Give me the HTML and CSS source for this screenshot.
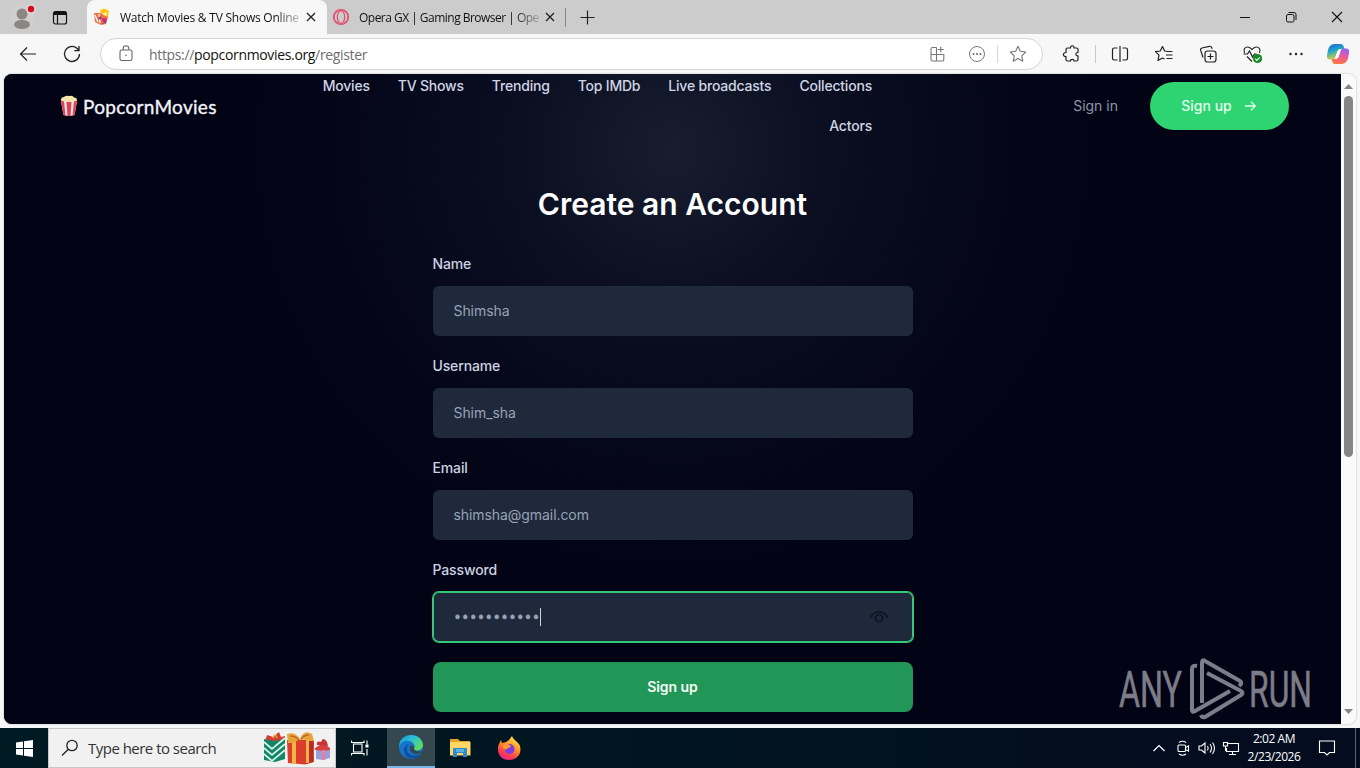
FILE: index.html
```
<!DOCTYPE html>
<html lang="en">
<head>
<meta charset="utf-8">
<title>Create an Account</title>
<link rel="stylesheet" href="styles.css">
</head>
<body>
<div class="desktop">
  <div class="tabstrip">
    <div class="strip-tools">
      <svg class="profile" width="28" height="30" viewBox="0 0 28 30"><circle cx="14" cy="14.500" r="13" fill="#d0cfce"/><circle cx="14" cy="12" r="5.500" fill="#8b8785"/><ellipse cx="14" cy="22.500" rx="8" ry="4.500" fill="#8b8785"/><circle cx="23" cy="7" r="5" fill="#e0d5d5"/><circle cx="23" cy="7" r="3.200" fill="#d30b1f"/></svg>
      <svg class="workspaces" width="16" height="16" viewBox="0 0 16 16" fill="none" stroke="#111" stroke-width="1.200"><rect x="1.500" y="1.500" width="13" height="12.500" rx="2"/><path d="M2 3.500h12" stroke-width="3"/><path d="M5.500 5v9"/></svg>
    </div>
    <div class="tab active">
      <svg class="favicon" width="18" height="18" viewBox="0 0 18 18"><path d="M7 2l4-1.500 3 1 2 1.500-1 6-7-1z" fill="#ffc61c"/><path d="M1 5l6 0 8 4-2 7-5 1-6-3z" fill="#f2703d"/><path d="M2 7l3 7M6 6l1 9" stroke="#fff" stroke-width="1.300"/><path d="M9 6l5-2-1 4z" fill="#fff1b0"/><circle cx="7" cy="10" r="1.600" fill="#8b3c94"/><circle cx="11" cy="12" r="2" fill="#d6257a"/><path d="M8 16l4-2 2-5-1 6z" fill="#6840a8"/></svg>
      <span class="tab-title first-title">Watch Movies &amp; TV Shows Online</span>
      <svg class="tab-close" width="10" height="10" viewBox="0 0 10 10"><path d="M1 1l8 8M9 1L1 9" stroke="#222" stroke-width="1.300"/></svg>
    </div>
    <div class="tab">
      <svg class="favicon" width="18" height="18" viewBox="0 0 18 18" fill="none" stroke="#e5486a"><circle cx="9" cy="9" r="7.400" stroke-width="1.300"/><ellipse cx="9" cy="9" rx="3.700" ry="6.300" stroke-width="1.200"/><path d="M6 3c-5 2-5 10 0 12M12 3c5 2 5 10 0 12" stroke-width=".8"/></svg>
      <span class="tab-title second-title">Opera GX | Gaming Browser | Ope</span>
      <svg class="tab-close" width="10" height="10" viewBox="0 0 10 10"><path d="M1 1l8 8M9 1L1 9" stroke="#222" stroke-width="1.300"/></svg>
      <i class="tab-divider"></i>
    </div>
    <svg class="new-tab" width="15" height="15" viewBox="0 0 15 15"><path d="M7.500 .5v14M.5 7.500h14" stroke="#222" stroke-width="1.200"/></svg>
    <div class="window-buttons">
      <svg width="46" height="34" viewBox="0 0 46 34"><path d="M18 17.500h10" stroke="#111"/></svg>
      <svg width="46" height="34" viewBox="0 0 46 34" fill="none" stroke="#111"><rect x="18.500" y="14.500" width="7.500" height="7.500" rx="1.500"/><path d="M20.500 12.500h5.500q2 0 2 2v5.500"/></svg>
      <svg width="46" height="34" viewBox="0 0 46 34"><path d="M18 12l10 10M28 12L18 22" stroke="#111" stroke-width="1.100"/></svg>
    </div>
  </div>

  <div class="toolbar">
    <svg class="tool nav-tool" width="20" height="20" viewBox="0 0 20 20" fill="none" stroke="#222" stroke-width="1.200"><path d="M18 10H2.500M9 3.500L2.500 10 9 16.500"/></svg>
    <svg class="tool nav-tool" width="20" height="20" viewBox="0 0 20 20" fill="none" stroke="#222" stroke-width="1.300"><path d="M17.500 10a7.500 7.500 0 1 1-2.600-5.700L17 6.500M17 2v4.700h-4.700"/></svg>
    <div class="address">
      <svg class="lock" width="16" height="18" viewBox="0 0 16 18" fill="none" stroke="#666" stroke-width="1.100"><rect x="2" y="5" width="12" height="10.500" rx="1.800"/><path d="M5.200 5V3.500a2.800 2.800 0 0 1 5.600 0V5"/><circle cx="8" cy="10.200" r=".8" fill="#666" stroke="none"/></svg>
      <span class="url">https://<b>popcornmovies.org</b>/register</span>
      <svg class="addr-icon" width="18" height="18" viewBox="0 0 18 18" fill="none" stroke="#777" stroke-width="1.100"><path d="M8.500 2.500h-4q-1.500 0-1.500 1.500v10.500q0 1.500 1.500 1.500h10q1.300 0 1.300-1.500V9.500H3M8.500 2.500v13.500M12.800 1.500v6M9.800 4.500h6"/></svg>
      <svg class="addr-icon dots-icon" width="18" height="18" viewBox="0 0 18 18" fill="none" stroke="#777"><circle cx="9" cy="9" r="7.500"/><g fill="#666" stroke="none"><circle cx="5.500" cy="9" r="1"/><circle cx="9" cy="9" r="1"/><circle cx="12.500" cy="9" r="1"/></g></svg>
      <i class="addr-divider"></i>
      <svg class="addr-icon" width="18" height="18" viewBox="0 0 18 18" fill="none" stroke="#777" stroke-width="1.100" stroke-linejoin="round"><path d="M9 1.300l2.300 5 5.500.7-4 3.800 1 5.500L9 13.600l-4.800 2.700 1-5.500-4-3.800 5.500-.7z"/></svg>
    </div>
    <svg class="tool" width="20" height="20" viewBox="0 0 20 20" fill="none" stroke="#222" stroke-width="1.200" stroke-linejoin="round"><path d="M6.500 4h3c-.5-3 4-3 3.500 0H15.500q1.500 0 1.500 1.500v3c-2.800-.3-2.800 3.600 0 3.300v3.700q0 1.500-1.500 1.500H13c.3-2.300-3.800-2.300-3.500 0h-3Q5 17 5 15.500v-3c-3.500.5-3.500-4.300 0-4v-3Q5 4 6.500 4z"/></svg>
    <i class="tool-divider"></i>
    <svg class="tool" width="20" height="20" viewBox="0 0 20 20" fill="none" stroke="#222" stroke-width="1.200"><path d="M7.500 4H4.200Q2.500 4 2.500 5.700v8.600Q2.500 16 4.200 16h3.300M12.500 4h3.300q1.700 0 1.700 1.700v8.600q0 1.700-1.700 1.700h-3.300M10 2v16"/></svg>
    <svg class="tool" width="20" height="20" viewBox="0 0 20 20" fill="none" stroke="#222" stroke-width="1.200" stroke-linejoin="round"><path d="M12.500 7.500h6M12 11h6.500M12.500 14.500h6M14 7.500l-3.400-.5L8.500 2.500 6.200 7l-4.700.7 3.500 3.500-1 5.300 4.500-2.500 2 1"/></svg>
    <svg class="tool" width="20" height="20" viewBox="0 0 20 20" fill="none" stroke="#222" stroke-width="1.200"><rect x="7" y="7" width="11" height="11" rx="2.500"/><path d="M12.500 9.500v6M9.500 12.500h6M5 13.500L2.700 6.400q-.5-1.900 1.200-2.400l7.500-1.700q1.800-.3 2.400 1.500l.3 1"/></svg>
    <svg class="tool" width="20" height="20" viewBox="0 0 20 20" fill="none" stroke="#222" stroke-width="1.200"><path d="M2.500 9C1 5 3.200 3 5.500 3 8 3 9 4.500 10 5.500 11 4.500 12 3 14.500 3c2.300 0 4.500 2 3 6M1.500 10h4L7.500 7l3 6 2-3h2M5 12.500l5 5"/><circle cx="15.500" cy="14.500" r="4.600" fill="#138a20" stroke="none"/><path d="M13.200 14.700l1.600 1.600 3-3" stroke="#fff"/></svg>
    <svg class="tool" width="20" height="20" viewBox="0 0 20 20" fill="#222"><circle cx="4.500" cy="10" r="1.200"/><circle cx="10" cy="10" r="1.200"/><circle cx="15.500" cy="10" r="1.200"/></svg>
    <svg class="tool copilot" width="24" height="24" viewBox="0 0 24 24">
      <defs><linearGradient id="cp1" x1="0" y1="0" x2=".3" y2="1"><stop offset="0" stop-color="#1b62d8"/><stop offset=".5" stop-color="#22a8c4"/><stop offset="1" stop-color="#d6cf3c"/></linearGradient><linearGradient id="cp2" x1=".6" y1="0" x2=".3" y2="1"><stop offset="0" stop-color="#9c5ff0"/><stop offset=".5" stop-color="#ef5a92"/><stop offset="1" stop-color="#ff7a3c"/></linearGradient></defs>
      <path d="M8 2h7q2 0 2.700 2.500L18.500 7H14q-2 0-2.700 2.500L9.500 15q-.8 2.500-3 2.500H4q-3.500 0-3-4Q2 2 8 2z" fill="url(#cp1)"/>
      <path d="M16 22H9q-2 0-2.700-2.500L5.500 17H10q2 0 2.700-2.500L14.500 9q.8-2.500 3-2.500H20q3.500 0 3 4Q22 22 16 22z" fill="url(#cp2)"/><path d="M11.500 9h3l-2 6h-3z" fill="#fff"/>
    </svg>
  </div>

  <div class="viewport">
    <div class="page">
      <header class="site-header">
        <div class="brand">
          <svg width="18" height="22" viewBox="0 0 18 22"><path d="M1 5q0-3 3-3 2-2 5-1 4-1 5 1.500 3 0 3 3l-1 3H2z" fill="#f5e6ad"/><path d="M.8 5.500L3.500 20q5.500 2 11 0L17.200 5.500Q9 8 .8 5.500z" fill="#f6dfe0"/><path d="M.8 5.500L3.500 20l2 .6L4 6.500zM6.500 7l1 14h3l1-14zM14 6.500L12.500 20.600l2-.6L17.200 5.500z" fill="#dd4357"/></svg>
          <span class="brand-name">PopcornMovies</span>
        </div>
        <nav class="menu">
          <a>Movies</a><a>TV Shows</a><a>Trending</a><a>Top IMDb</a><a>Live broadcasts</a><a>Collections</a><a>Actors</a>
        </nav>
        <div class="account">
          <a class="sign-in">Sign in</a>
          <a class="pill">Sign up <svg width="14" height="12" viewBox="0 0 14 12" fill="none" stroke="currentColor" stroke-width="1.300"><path d="M1 6h10.500M7 1.800L11.300 6 7 10.200"/></svg></a>
        </div>
      </header>
      <main class="form">
        <h1>Create an Account</h1>
        <div class="field"><label>Name</label><div class="input">Shimsha</div></div>
        <div class="field"><label>Username</label><div class="input">Shim_sha</div></div>
        <div class="field"><label>Email</label><div class="input">shimsha@gmail.com</div></div>
        <div class="field"><label>Password</label><div class="input focused"><span class="dots">•••••••••••</span><i class="caret"></i>
          <svg class="eye" width="20" height="16" viewBox="0 0 20 16" fill="none" stroke="#0a1220" stroke-width="1.500"><circle cx="10" cy="9" r="3.600"/><path d="M1.500 9C4 1 16 1 18.500 9"/></svg></div></div>
        <button class="submit">Sign up</button>
      </main>
      <svg class="watermark" width="210" height="66" viewBox="0 0 210 66">
        <g fill="#7c7d88" stroke="#7c7d88" stroke-width=".6" font-family="Roboto, sans-serif" font-size="50"><text x="5" y="51" textLength="63" lengthAdjust="spacingAndGlyphs">ANY</text><text x="135" y="51" textLength="63" lengthAdjust="spacingAndGlyphs">RUN</text></g>
        <g fill="none" stroke="#7c7d88" stroke-width="4" stroke-linejoin="round" stroke-linecap="butt"><path d="M83 10q-5-1-5 3v41q0 3 3 1l35-20"/><path d="M88 47V7q0-4 3-2l35 20q3 2-1 5"/><path d="M93 17l34 18q3 2 0 4L91 61q-3 1-4-2"/></g>
      </svg>
    </div>
    <div class="scrollbar">
      <svg width="9" height="5" viewBox="0 0 9 5"><path d="M0 5L4.500 0 9 5z" fill="#858585"/></svg>
      <i class="thumb"></i>
      <svg class="down" width="9" height="5" viewBox="0 0 9 5"><path d="M0 0l4.500 5L9 0z" fill="#858585"/></svg>
    </div>
  </div>

  <div class="taskbar">
    <div class="start"><svg width="17" height="17" viewBox="0 0 17 17" fill="#fff"><path d="M0 2.400L7 1.400V8H0zM8 1.200L17 0v8H8zM0 9h7v6.600L0 14.600zM8 9h9v8l-9-1.200z"/></svg></div>
    <div class="search">
      <svg width="18" height="18" viewBox="0 0 18 18" fill="none" stroke="#222" stroke-width="1.300"><circle cx="11" cy="6.500" r="5.200"/><path d="M7.300 10.200L1 16.500"/></svg>
      <span>Type here to search</span>
      <svg class="gifts" width="68" height="34" viewBox="0 0 68 34">
        <path d="M2 10l2-6 6 2 6-5 2 5 4-1v6z" fill="#d63d32"/><path d="M10 7q2-6 4 0" fill="none" stroke="#e7b53e" stroke-width="1.500"/><path d="M1 8l10 2 11-2v20l-10 3-11-2z" fill="#118666"/><path d="M1 11l8 7 13-11M1 17l8 7 13-11M1 23l8 7 13-11" fill="none" stroke="#d9f5ea" stroke-width="1.700"/>
        <path d="M24 9h27v22l-9 2.500L25 32z" fill="#db3d2c"/><path d="M43 10h7v21l-7 2z" fill="#b72c25"/><path d="M29 9h4v24h-4zM43 9h3v23h-3z" fill="#f1b447"/><path d="M24 3q8-3 13 5Q41-2 49 3l2 7h-5l-8-2-9 4h-4z" fill="#e8a43a"/><path d="M27 5q6 0 9 4M46 4q-6 0-8 5" fill="none" stroke="#bd6d23" stroke-width="1.400"/>
        <path d="M53 18l14-1v10l-7 2-7-1z" fill="#9b9fd8"/><path d="M52 17l8-5 7 5v2l-7 1-8-1z" fill="#d9413f"/><path d="M54 14q-1-5 4-3 2-6 6 0l1 4z" fill="#c93435"/><path d="M59 19h3v10h-3z" fill="#e87ea8"/>
      </svg>
    </div>
    <div class="task task-view"><svg width="18" height="18" viewBox="0 0 18 18" fill="none" stroke="#fff" stroke-width="1.100"><rect x="2.500" y="5" width="8.500" height="8"/><path d="M.5 1.500v2h12.500v-2M.5 16.500v-2h12.500v2M16 1.500v4M16 10v6.500"/><path d="M14.500 5.500h3v3h-3z" fill="#fff" stroke="none"/></svg></div>
    <div class="task current"><svg width="26" height="26" viewBox="0 0 26 26"><defs><linearGradient id="eg" x1="0" y1="0" x2="1" y2=".7"><stop offset="0" stop-color="#168fdf"/><stop offset=".5" stop-color="#2bc3d2"/><stop offset="1" stop-color="#66dc54"/></linearGradient></defs><circle cx="13" cy="13" r="12" fill="#1473cb"/><path d="M1 13C1 5 7 1 13 1c8 0 12 6 12 10 0 6-9 7-9 4 1-2 1-4-1-6C11 5 3 6 1 13z" fill="url(#eg)"/><path d="M9 14c0 8 7 9 14 6-5 7-16 6-17-3-.5-4 3-7 5-7-1 1-2 2-2 4z" fill="#104f9c"/><path d="M13 11c-3 4 0 8 4 9 3 .6 6-1 7-2v-1c-3 1-7 0-8-2 0-2 0-3-3-4z" fill="#35484f"/></svg></div>
    <div class="task"><svg width="22" height="20" viewBox="0 0 22 20"><path d="M1 1h8l2 2h10v5H1z" fill="#e7a22b"/><path d="M1 4h20.500v13.500H1z" fill="#ffd765"/><path d="M4 19v-8q0-1 1-1h12q1 0 1 1v8h-4v-4H8v4z" fill="#2d8bcc"/><path d="M7 11h8v3H7z" fill="#59b4e2"/></svg></div>
    <div class="task"><svg width="24" height="25" viewBox="0 0 24 25"><defs><linearGradient id="ff" x1=".8" y1="0" x2=".3" y2="1"><stop offset="0" stop-color="#fff04c"/><stop offset=".45" stop-color="#ff9027"/><stop offset=".8" stop-color="#fb3756"/><stop offset="1" stop-color="#e82486"/></linearGradient></defs><path d="M2 8l2-4 1 3 4-1 3-2 3-4c1 4 6 5 8 10 2 8-3 14-11 14C5 24 1 19 1 14c0-3 0-4 1-6z" fill="url(#ff)"/><circle cx="12.500" cy="13" r="5" fill="#7d3be0"/><path d="M6 9l5-1 3 2-2 2c-2 0-3 1-3 2l-3-2z" fill="#ff9a2d"/></svg></div>
    <div class="tray">
      <svg width="24" height="20" viewBox="0 0 24 20" fill="none" stroke="#fff" stroke-width="1.200"><path d="M6.500 13l5.500-5.500 5.500 5.500"/></svg>
      <svg width="24" height="20" viewBox="0 0 24 20" fill="none" stroke="#fff" stroke-width="1.100"><rect x="7" y="7" width="7.500" height="6.500" rx="1"/><path d="M14.500 9.500l3-1.500v5l-3-1.500M8 4.500q3.500-2.500 7 0M8 16q3.500 2.500 7 0"/></svg>
      <svg width="24" height="20" viewBox="0 0 24 20" fill="none" stroke="#fff" stroke-width="1.100"><path d="M4 8h2.500L10 5v10l-3.500-3H4zM12.500 8q1.500 2 0 4.500M15 6q3 4 0 8.500M17.500 4.500q4 5.500 0 11.500"/></svg>
      <svg width="24" height="20" viewBox="0 0 24 20" fill="none" stroke="#fff" stroke-width="1.100"><path d="M9 5.500h10.500v8H7.500v-3.500M13.500 13.500v3M10 16.500h7"/><rect x="4.500" y="4.500" width="4" height="3.500"/><path d="M6.500 8v5"/></svg>
      <div class="clock"><span>2:02 AM</span><span>2/23/2026</span></div>
      <svg class="note" width="18" height="18" viewBox="0 0 18 18" fill="none" stroke="#fff" stroke-width="1.100"><path d="M1.500 2h15v11.500h-5L9 16l-2.500-2.500h-5z"/></svg>
      <i class="peek"></i>
    </div>
  </div>
</div>
</body>
</html>
```
FILE: styles.css
```
* { box-sizing: border-box; }
body { margin: 0; overflow: hidden; font-family: "Open Sans", "Noto Sans", sans-serif; }
svg { display: block; flex: none; }
.desktop { width: 1360px; height: 768px; display: flex; flex-direction: column; background: #f7f7f7; }

.tabstrip { height: 34px; flex: none; display: flex; align-items: center; background: #cccccc; }
.strip-tools { width: 87px; height: 34px; display: flex; align-items: center; padding-left: 8px; gap: 16px; }
.workspaces { margin-top: 1px; }
.tab { width: 240px; height: 34px; display: flex; align-items: center; padding-left: 6px; }
.tab.active { background: #f7f7f7; border-radius: 8px 8px 0 0; }
.tab-title { width: 180px; margin-left: 9px; overflow: hidden; white-space: nowrap; font-size: 12px; color: #111; -webkit-mask-image: linear-gradient(90deg, #000 155px, transparent 186px); mask-image: linear-gradient(90deg, #000 155px, transparent 186px); }
.first-title { letter-spacing: -.23px; }
.second-title { letter-spacing: -.52px; }
.tab-close { margin-left: 6px; }
.tab:not(.active) .favicon { margin-left: -1px; }
.tab-divider { width: 1px; height: 19px; margin-left: 10px; background: #888; }
.new-tab { margin-left: 13px; }
.window-buttons { display: flex; margin-left: auto; }

.toolbar { height: 40px; flex: none; display: flex; align-items: center; padding-left: 8px; }
.tool { margin: 0 12px; }
.nav-tool { margin: 0 14px 0 10px; }
.toolbar > .copilot { margin: 0 0 0 8px; }
.address { width: 943px; height: 32px; margin-left: 4px; margin-right: -5px; display: flex; align-items: center; padding: 0 15px 0 17px; background: #fff; border: 1px solid #d5d5d5; border-radius: 16px; }
.address + .tool { margin-left: 23px; }
.url { flex: 1; margin-left: 15px; font-size: 14px; color: #6d6d6d; letter-spacing: -.34px; }
.url b { font-weight: 400; color: #111; }
.dots-icon { margin-left: 22px; }
.addr-divider { width: 1px; height: 18px; margin: 0 11px; background: #d5d5d5; }
.tool-divider { width: 1px; height: 18px; margin: 0 2px; background: #c9c9c9; }

.viewport { width: 1352px; height: 650px; flex: none; margin-left: 4px; display: flex; overflow: hidden; border-radius: 8px; box-shadow: 0 0 2px #aaa; }
.page { position: relative; width: 1337px; height: 650px; overflow: hidden; background: radial-gradient(circle 430px at 668px 75px, #171c2e 0, #111628 70px, #0a0e20 160px, #06091b 270px, #020315 430px) #020315; font-family: Inter, sans-serif; }
.site-header { height: 64px; display: flex; align-items: center; padding: 0 52px 0 56px; }
.brand { width: 202px; flex: none; display: flex; align-items: center; gap: 5px; }
.brand-name { font: 400 19px Lato, sans-serif; letter-spacing: .3px; color: #f2f3fa; -webkit-text-stroke: .35px; }
.menu { width: 610px; flex: none; display: flex; flex-wrap: wrap; justify-content: flex-end; column-gap: 28px; padding-left: 40px; font-size: 14px; line-height: 40px; font-weight: 500; letter-spacing: -.2px; color: #cfd5e5; }
.account { flex: 1; display: flex; align-items: center; justify-content: flex-end; gap: 32px; padding-bottom: 1px; font-size: 14px; color: #8d96a9; }
.pill { width: 139px; height: 48px; margin-bottom: -1px; padding-bottom: 1px; display: flex; align-items: center; justify-content: center; gap: 12px; border-radius: 24px; background: #2dd471; color: #e4fff0; font-weight: 500; }

.form { width: 480px; margin: 48px auto 0; display: flex; flex-direction: column; gap: 20px; }
.form h1 { margin: 0 0 12px; text-align: center; font-size: 30px; line-height: 36px; font-weight: 600; color: #fff; }
.field label { display: block; margin-bottom: 12px; font-size: 14px; line-height: 20px; font-weight: 500; letter-spacing: -.14px; color: #cbd2e1; }
.input { height: 50px; display: flex; align-items: center; padding: 0 21px 1px; border-radius: 6px; background: #1e293b; font-size: 14px; letter-spacing: -.07px; color: #98a3b6; }
.focused { padding-bottom: 0; box-shadow: inset 0 0 0 1px #35c878, 0 0 0 1px #35c878; }
.dots { font: 13.2px "DejaVu Sans Mono", monospace; letter-spacing: -.1px; -webkit-text-stroke: .5px; }
.caret { width: 1px; height: 18px; background: #ccd3df; }
.eye { margin-left: auto; margin-right: 3px; }
.submit { height: 50px; padding: 0 0 2px; border: 0; border-radius: 8px; background: #219657; color: #f4fff8; font: 600 14px Inter, sans-serif; letter-spacing: -.05px; }
.watermark { position: absolute; right: 17px; bottom: 2px; }

.scrollbar { width: 15px; display: flex; flex-direction: column; align-items: center; padding: 10px 0; background: #fafafa; }
.thumb { width: 9px; height: 361px; margin-top: 7px; border-radius: 5px; background: #858585; }
.down { margin-top: auto; }

.taskbar { height: 40px; margin-top: 4px; display: flex; align-items: center; background: linear-gradient(90deg, #001a23, #001520 50%, #040d1f 85%); }
.start { width: 48px; display: flex; justify-content: center; }
.search { width: 288px; height: 40px; display: flex; align-items: center; padding-left: 12px; border: 1px solid #c8c8c8; background: #f1f1f1; }
.search span { width: 175px; margin-left: 9px; font-size: 15px; letter-spacing: -.52px; color: #333; white-space: nowrap; }
.task { width: 49px; height: 40px; display: flex; align-items: center; justify-content: center; }
.task-view { padding-right: 2px; }
.current { width: 48px; margin-left: 2px; background: #35484f; border-bottom: 2px solid #76b5e5; }
.tray { margin-left: auto; height: 40px; display: flex; align-items: center; color: #fff; }
.clock { width: 62px; display: flex; flex-direction: column; align-items: center; font-size: 12px; line-height: 18px; letter-spacing: -.45px; }
.note { margin-left: 13px; }
.peek { width: 1px; height: 40px; margin: 0 4px 0 19px; background: #5a6470; }
```
